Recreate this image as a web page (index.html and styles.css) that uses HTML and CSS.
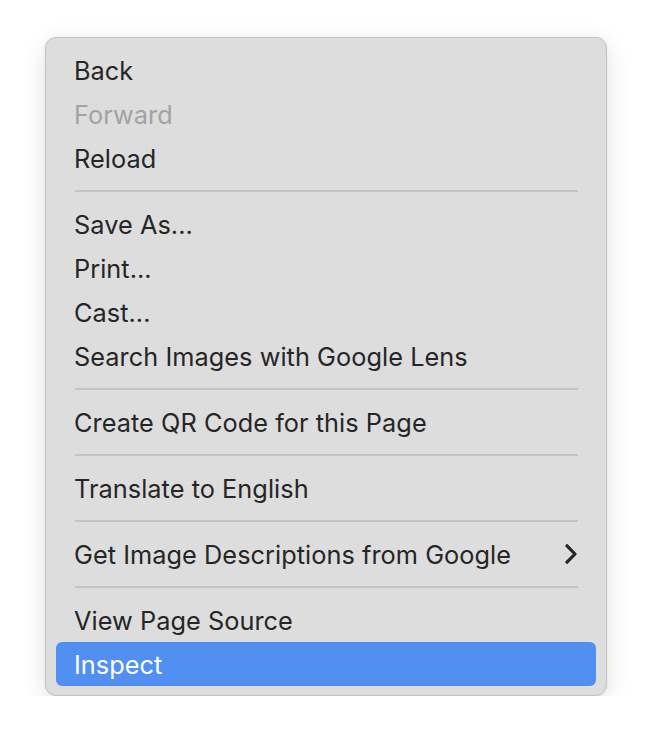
FILE: index.html
```html
<!DOCTYPE HTML>
<html>
<head>
<link rel="stylesheet" href="styles.css">
</head>
<body>

    <div class="menu">
        <div class="menu-item">Back</div>
        <div class="menu-item disabled">Forward</div>
        <div class="menu-item">Reload</div>
        <div class="separator"></div>
        <div class="menu-item">Save As...</div>
        <div class="menu-item">Print...</div>
        <div class="menu-item">Cast...</div>
        <div class="menu-item">Search Images with Google Lens</div>
        <div class="separator"></div>
        <div class="menu-item">Create QR Code for this Page</div>
        <div class="separator"></div>
        <div class="menu-item">Translate to English</div>
        <div class="separator"></div>
        <div class="menu-item submenu">
            <span>Get Image Descriptions from Google</span>
            <svg class="chevron" width="12" height="20" viewBox="0 0 12 20">
                <path d="M2 1.8 L10 10 L2 18.2" fill="none" stroke="#262626" stroke-width="3.2" stroke-linecap="round" stroke-linejoin="round"/>
            </svg>
        </div>
        <div class="separator"></div>
        <div class="menu-item">View Page Source</div>
        <div class="menu-item selected">Inspect</div>
    </div>

</body>
</html>
```

FILE: styles.css
```css
body {
  margin: 0;
  background-color: #ffffff;
  font-family: Inter, "Noto Sans", sans-serif;
}

.menu {
  width: 540px;
  margin: 37px 0 0 45px;
  padding: 10px 10px 9px 10px;
  background-color: #dddddd;
  border: 1px solid #c2c2c2;
  border-radius: 11px;
  box-shadow: 0 6px 24px rgba(0, 0, 0, 0.12), 0 0 3px rgba(0, 0, 0, 0.05);
}

.menu-item {
  display: flex;
  align-items: center;
  justify-content: space-between;
  height: 44px;
  padding: 0 19px 0 18px;
  font-size: 25.3px;
  letter-spacing: 0.05px;
  color: #262626;
  border-radius: 6px;
}

.disabled {
  color: #a2a2a2;
}

.selected {
  background-color: #528ff2;
  color: #ffffff;
}

.separator {
  height: 2px;
  margin: 10px 18px 10px 19px;
  background-color: #c4c4c4;
}

.chevron {
  margin-right: 0;
}
```
